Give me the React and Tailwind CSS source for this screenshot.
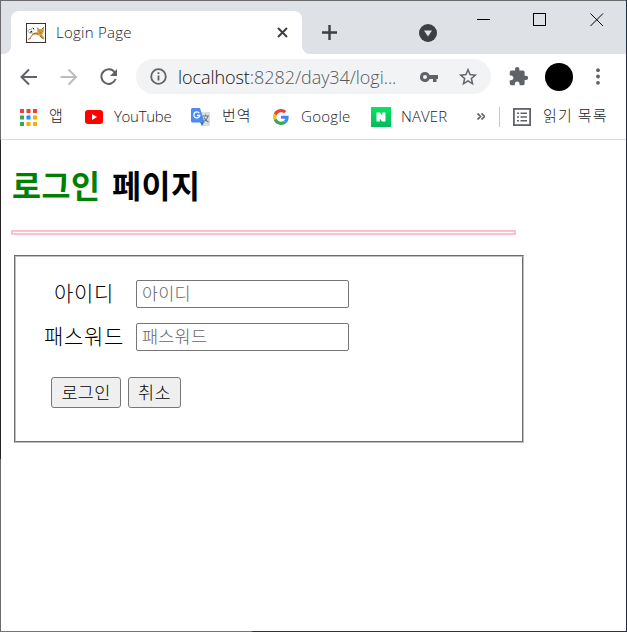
import React, { useState } from "react";

const fontUi = "font-['Open_Sans','Noto_Sans_CJK_KR',sans-serif]";
const fontPage = "font-['Noto_Sans_CJK_KR',sans-serif]";

// Tomcat cat used as the tab favicon
const CatIcon = () => (
  <svg className="w-5 h-5 shrink-0" viewBox="0 0 20 20" fill="none">
    <rect x="0.5" y="0.5" width="19" height="19" fill="#fff" stroke="#333" />
    <path d="M3.500 15.500 5 12.500 8 10 11.500 9.500 11 5 13 6h2.500L18 4l-.3 5-1.700 2.500 2.500 3.500-.5 1-2.500-.8-2.500-2.700-3.500-1-3 1L4 16.500z" fill="#d6a03e" />
    <path d="M6 11.500c2-1.500 4-2 6-.5M2 16.500l3-1.500M14 13l3.500 3" stroke="#7a5a25" strokeWidth="0.8" />
    <path d="M6.500 9.500C4 10.500 1.500 9.500 2.200 7.500S5.500 7 6 5.500 8.500 5.500 8 7" stroke="#888" strokeWidth="0.8" />
    <path d="M4.500 9.500l1.500-1.500M7 5.500h1" stroke="#222" strokeWidth="1.200" />
    <path d="M11 4.500l1.500 1.500M17.800 4l-1.600 2M12.500 8h1M15.500 8h1M13.500 10h2" stroke="#8a5f1a" strokeWidth="0.8" />
  </svg>
);

const AppsIcon = () => (
  <svg className="w-[17px] h-[17px] shrink-0" viewBox="0 0 17 17">
    <path d="M0 0h4v4H0zM6.500 0h4v4h-4zM13 0h4v4h-4z" fill="#ea4335" />
    <path d="M0 6.500h4v4H0zM0 13h4v4H0z" fill="#34a853" />
    <path d="M6.500 6.500h4v4h-4z" fill="#1a8cff" />
    <path d="M13 6.500h4v4h-4zM6.500 13h4v4h-4zM13 13h4v4h-4z" fill="#fbab05" />
  </svg>
);

const YoutubeIcon = () => (
  <svg className="w-[18px] h-[14px] shrink-0" viewBox="0 0 18 14">
    <rect width="18" height="14" rx="3" fill="#f00" />
    <path d="M7 4v6l5-3z" fill="#fff" />
  </svg>
);

const TranslateIcon = () => (
  <svg className="w-5 h-5 shrink-0" viewBox="0 0 20 20" fill="none">
    <path d="M7 5h11a1 1 0 0 1 1 1v12a1 1 0 0 1-1 1h-7z" fill="#dcdcdc" />
    <path d="M9 15h4l-2 4z" fill="#3a5bc7" />
    <path d="M1.500 1H9l4.500 14.500h-12A1.500 1.500 0 0 1 0 14V2.500A1.500 1.500 0 0 1 1.500 1z" fill="#4c8bf5" />
    <path d="M8.300 6.200A3 3 0 1 0 8.800 8.500H6" stroke="#fff" strokeWidth="1.300" />
    <path d="M11.500 9H18M14.500 7.500V9M17 9c-.5 3-2.500 4.500-4 5.500M13 10.500c1 2 2.500 3.500 4.500 4.500" stroke="#607988" strokeWidth="1.100" />
  </svg>
);

const GoogleIcon = () => (
  <svg className="w-4 h-4 shrink-0" viewBox="0 0 48 48">
    <path fill="#EA4335" d="M24 9.500c3.540 0 6.710 1.220 9.210 3.600l6.850-6.850C35.900 2.380 30.470 0 24 0 14.620 0 6.510 5.380 2.560 13.220l7.980 6.190C12.430 13.720 17.740 9.500 24 9.500z" />
    <path fill="#4285F4" d="M46.980 24.550c0-1.570-.15-3.090-.38-4.550H24v9.020h12.940c-.58 2.960-2.260 5.480-4.780 7.180l7.730 6c4.510-4.180 7.090-10.360 7.090-17.650z" />
    <path fill="#FBBC05" d="M10.530 28.590c-.48-1.450-.76-2.990-.76-4.590s.27-3.140.76-4.590l-7.980-6.190C.92 16.460 0 20.120 0 24c0 3.880.92 7.540 2.560 10.780z" />
    <path fill="#34A853" d="M24 48c6.480 0 11.930-2.130 15.890-5.810l-7.730-6c-2.150 1.450-4.920 2.300-8.160 2.300-6.260 0-11.570-4.220-13.470-9.910l-7.980 6.190C6.510 42.620 14.620 48 24 48z" />
  </svg>
);

const NaverIcon = () => (
  <svg className="w-5 h-5 shrink-0" viewBox="0 0 20 20">
    <defs>
      <linearGradient id="naver" x1="0" y1="0" x2="0" y2="1">
        <stop offset="0" stopColor="#04e762" />
        <stop offset="1" stopColor="#04b85e" />
      </linearGradient>
    </defs>
    <rect width="20" height="20" fill="url(#naver)" />
    <path d="M5.500 5.500H9l2.200 3.300V5.500h3.300v9H11l-2.200-3.300v3.300H5.500z" fill="#fff" />
  </svg>
);

const TabStrip = () => (
  <div className="flex h-[53px] bg-[#dee1e6] shrink-0">
    <div className="relative flex items-center ml-[10px] mt-[10px] w-[291px] h-[43px] bg-white rounded-t-lg pl-[15px]">
      {/* flared bottom corners of the active tab */}
      <span className="absolute -left-2 bottom-0 w-2 h-2 bg-white">
        <span className="block w-2 h-2 bg-[#dee1e6] rounded-br-lg" />
      </span>
      <span className="absolute -right-2 bottom-0 w-2 h-2 bg-white">
        <span className="block w-2 h-2 bg-[#dee1e6] rounded-bl-lg" />
      </span>
      <CatIcon />
      <span className="ml-[10px] mb-[2px] w-[221px] text-[15px] leading-5 tracking-[0.25px] text-[#202124] whitespace-nowrap">Login Page</span>
      <svg className="w-[11px] h-[11px] shrink-0" viewBox="0 0 11 11" stroke="#3c4043" strokeWidth="2">
        <path d="M1 1l9 9M10 1l-9 9" />
      </svg>
    </div>
    <svg className="w-[15px] h-[15px] ml-5 mt-6 shrink-0" viewBox="0 0 15 15" stroke="#3c4043" strokeWidth="2.400">
      <path d="M7.500 0v15M0 7.500h15" />
    </svg>
    <svg className="w-[18px] h-[18px] ml-[82px] mt-[23px] shrink-0" viewBox="0 0 18 18">
      <circle cx="9" cy="9" r="9" fill="#3c4043" />
      <path d="M5 6.500h8L9 12.500z" fill="#dee1e6" />
    </svg>
    <div className="flex ml-[39px] mt-3 gap-[43px]">
      <svg className="w-[14px] h-[14px]" viewBox="0 0 14 14" stroke="#000">
        <path d="M1 6.500h13" />
      </svg>
      <svg className="w-[14px] h-[14px]" viewBox="0 0 14 14" stroke="#000" fill="none">
        <rect x="0.5" y="0.5" width="12" height="12" />
      </svg>
      <svg className="w-[14px] h-[14px]" viewBox="0 0 14 14" stroke="#000">
        <path d="M0.500 0.500l12.500 12.500M13 0.500L0.500 13" />
      </svg>
    </div>
  </div>
);

const Toolbar = () => (
  <div className="flex items-center h-[45px] pl-4 shrink-0 text-[#5f6368]">
    <svg className="w-6 h-6 shrink-0" viewBox="0 0 24 24" fill="none" stroke="currentColor" strokeWidth="2">
      <path d="M20 12H5M12 4.500L4.500 12l7.500 7.500" />
    </svg>
    <svg className="w-6 h-6 ml-4 shrink-0" viewBox="0 0 24 24" fill="none" stroke="#bbbdbf" strokeWidth="2">
      <path d="M3.500 12h15M11.500 4.500l7.500 7.500-7.500 7.500" />
    </svg>
    <svg className="w-6 h-6 ml-4 shrink-0" viewBox="0 0 24 24" fill="none" stroke="currentColor" strokeWidth="2">
      <path d="M17.800 7.500A7.300 7.300 0 1 0 18.600 14" />
      <path d="M20 4v7h-7z" fill="currentColor" stroke="none" />
    </svg>
    <div className="flex items-center ml-[15px] w-[355px] h-[35px] rounded-full bg-[#f1f3f4] pl-[14px] shrink-0">
      <svg className="w-[17px] h-[17px] shrink-0" viewBox="0 0 17 17" fill="none" stroke="currentColor" strokeWidth="1.800">
        <circle cx="8.500" cy="8.500" r="7.300" />
        <path d="M8.500 7.500v5M8.500 4.200v1.900" />
      </svg>
      <span className="ml-[11px] w-[242px] text-[18px] leading-6 tracking-[-0.06px] whitespace-nowrap text-[#55595d]">
        <span className="text-[#111]">localhost</span>:8282/day34/logi...
      </span>
      <svg className="w-[18px] h-[10px] shrink-0" viewBox="0 0 18 10">
        <path fillRule="evenodd" fill="currentColor" d="M5 0a5 5 0 0 1 4.600 3H18v4h-1.500v3h-3.500V7H9.600A5 5 0 1 1 5 0zM5 3a2 2 0 1 0 0 4 2 2 0 0 0 0-4z" />
      </svg>
      <svg className="w-[22px] h-[22px] ml-[19px] shrink-0" viewBox="0 0 24 24" fill="currentColor">
        <path d="M22 9.240l-7.190-.62L12 2 9.190 8.630 2 9.240l5.460 4.730L5.820 21 12 17.270 18.180 21l-1.630-7.030L22 9.240zM12 15.400l-3.760 2.270 1-4.280-3.320-2.880 4.380-.38L12 6.100l1.710 4.040 4.380.38-3.320 2.880 1 4.280L12 15.400z" />
      </svg>
    </div>
    <svg className="w-[21px] h-[21px] ml-[17px] shrink-0" viewBox="0 0 24 24" fill="currentColor">
      <path d="M20.500 11H19V7c0-1.100-.9-2-2-2h-4V3.500a2.500 2.500 0 0 0-5 0V5H4c-1.100 0-1.990.9-1.990 2v3.800H3.500c1.490 0 2.700 1.210 2.700 2.700s-1.210 2.700-2.700 2.700H2V20c0 1.100.9 2 2 2h3.800v-1.500c0-1.490 1.210-2.700 2.700-2.700 1.490 0 2.700 1.210 2.700 2.700V22H17c1.100 0 2-.9 2-2v-4h1.500a2.500 2.500 0 0 0 0-5z" />
    </svg>
    <span className="w-7 h-7 ml-4 rounded-full bg-black shrink-0" />
    <svg className="w-1 h-[17px] ml-[23px] shrink-0" viewBox="0 0 4 17" fill="currentColor">
      <circle cx="2" cy="2.200" r="1.900" />
      <circle cx="2" cy="8.500" r="1.900" />
      <circle cx="2" cy="14.800" r="1.900" />
    </svg>
  </div>
);

const BookmarksBar = () => (
  <div className="flex items-center h-[41px] pl-[19px] pb-[4px] border-b border-[#d8dadd] text-[15px] leading-5 text-[#202124] whitespace-nowrap shrink-0">
    <AppsIcon />
    <span className="ml-3 mb-1 w-[36px]">앱</span>
    <YoutubeIcon />
    <span className="ml-[11px] mb-[3px] w-[77px] tracking-[-0.3px]">YouTube</span>
    <TranslateIcon />
    <span className="ml-[11px] mb-1 w-[51px] tracking-[1px]">번역</span>
    <GoogleIcon />
    <span className="ml-3 mb-[3px] w-[70px] tracking-[0.3px]">Google</span>
    <NaverIcon />
    <span className="ml-[10px] mb-[3px] w-[76px] tracking-[0.1px]">NAVER</span>
    <svg className="w-2 h-[7px] mb-[2px] shrink-0" viewBox="0 0 8 7" fill="none" stroke="#5f6368" strokeWidth="1.700">
      <path d="M.5.500l3 3-3 3M4.500.500l3 3-3 3" />
    </svg>
    <span className="w-px h-5 ml-[14px] bg-[#c6c8ca] shrink-0" />
    <svg className="w-[18px] h-[18px] ml-[13px] mb-px shrink-0" viewBox="0 0 18 18" fill="none" stroke="#5f6368" strokeWidth="1.800">
      <rect x="0.9" y="0.9" width="16.200" height="16.200" />
      <path d="M4 5.200h2M7.500 5.200H14M4 9h2M7.500 9H14M4 12.800h2M7.500 12.800H14" strokeWidth="1.500" />
    </svg>
    <span className="ml-3 mb-1 tracking-[1.1px]">읽기 목록</span>
  </div>
);

const LoginForm = () => {
  const [userId, setUserId] = useState("");
  const [password, setPassword] = useState("");

  const inputClass =
    "w-[213px] h-7 px-[5px] pb-1 border border-[#767676] rounded-[2px] bg-white text-[17.5px] leading-6 tracking-[0.2px] text-black placeholder:text-[#666] outline-none";
  const buttonClass =
    "h-[31px] pb-[2px] border border-[#767676] rounded-[3px] bg-[#efefef] text-[17.5px] leading-6 tracking-[0.3px] text-black text-center whitespace-nowrap";
  const labelClass =
    "w-[100px] pr-[4px] mb-[4px] text-center text-[21px] leading-7 tracking-[0.7px]";

  return (
    <form className="font-light" onSubmit={(e) => e.preventDefault()}>
      <fieldset className="ml-[13px] mt-5 w-[510px] h-[188px] pt-[23px] pl-[20px] border-2 [border-style:groove] border-[#c0c0c0]">
        <div className="flex items-center h-7">
          <label htmlFor="userId" className={labelClass}>아이디</label>
          <input id="userId" className={inputClass} placeholder="아이디" value={userId} onChange={(e) => setUserId(e.target.value)} />
        </div>
        <div className="flex items-center h-7 mt-[15px]">
          <label htmlFor="password" className={labelClass}>패스워드</label>
          <input id="password" type="password" className={inputClass} placeholder="패스워드" value={password} onChange={(e) => setPassword(e.target.value)} />
        </div>
        <div className="flex gap-[7px] ml-[15px] mt-[26px]">
          <button type="submit" className={`${buttonClass} w-[70px]`}>로그인</button>
          <button type="reset" className={`${buttonClass} w-[53px]`}>취소</button>
        </div>
      </fieldset>
    </form>
  );
};

const App = () => {
  return (
    <div className="flex w-[627px] h-[632px] bg-white overflow-hidden">
      {/* left window edge */}
      <div className="w-px shrink-0 bg-[#6b6b6b]">
        <div className="mt-[140px] h-[319px] bg-[#242424]" />
      </div>
      <div className="flex flex-col w-[625px] shrink-0">
        <div className="h-px bg-[#6b6b6b] shrink-0" />
        <div className={`${fontUi} font-light`}>
          <TabStrip />
          <Toolbar />
          <BookmarksBar />
        </div>
        <main className={`${fontPage} grow text-black`}>
          <h1 className="ml-[11px] mt-5 h-[50px] text-[31.5px] leading-[48px] tracking-[0.5px] [word-spacing:4px] font-bold whitespace-nowrap">
            <span className="text-[#008000]">로그인</span> 페이지
          </h1>
          <hr className="ml-[10px] mt-5 w-[505px] h-[5px] border-2 border-[#ffc0cb]" />
          <LoginForm />
        </main>
        <div className="flex h-px shrink-0 bg-[#333]">
          <span className="w-[251px] bg-[#757575]" />
        </div>
      </div>
      {/* right window edge */}
      <div className="w-px shrink-0 bg-[#1e2a4a]" />
    </div>
  );
};

export default App;
